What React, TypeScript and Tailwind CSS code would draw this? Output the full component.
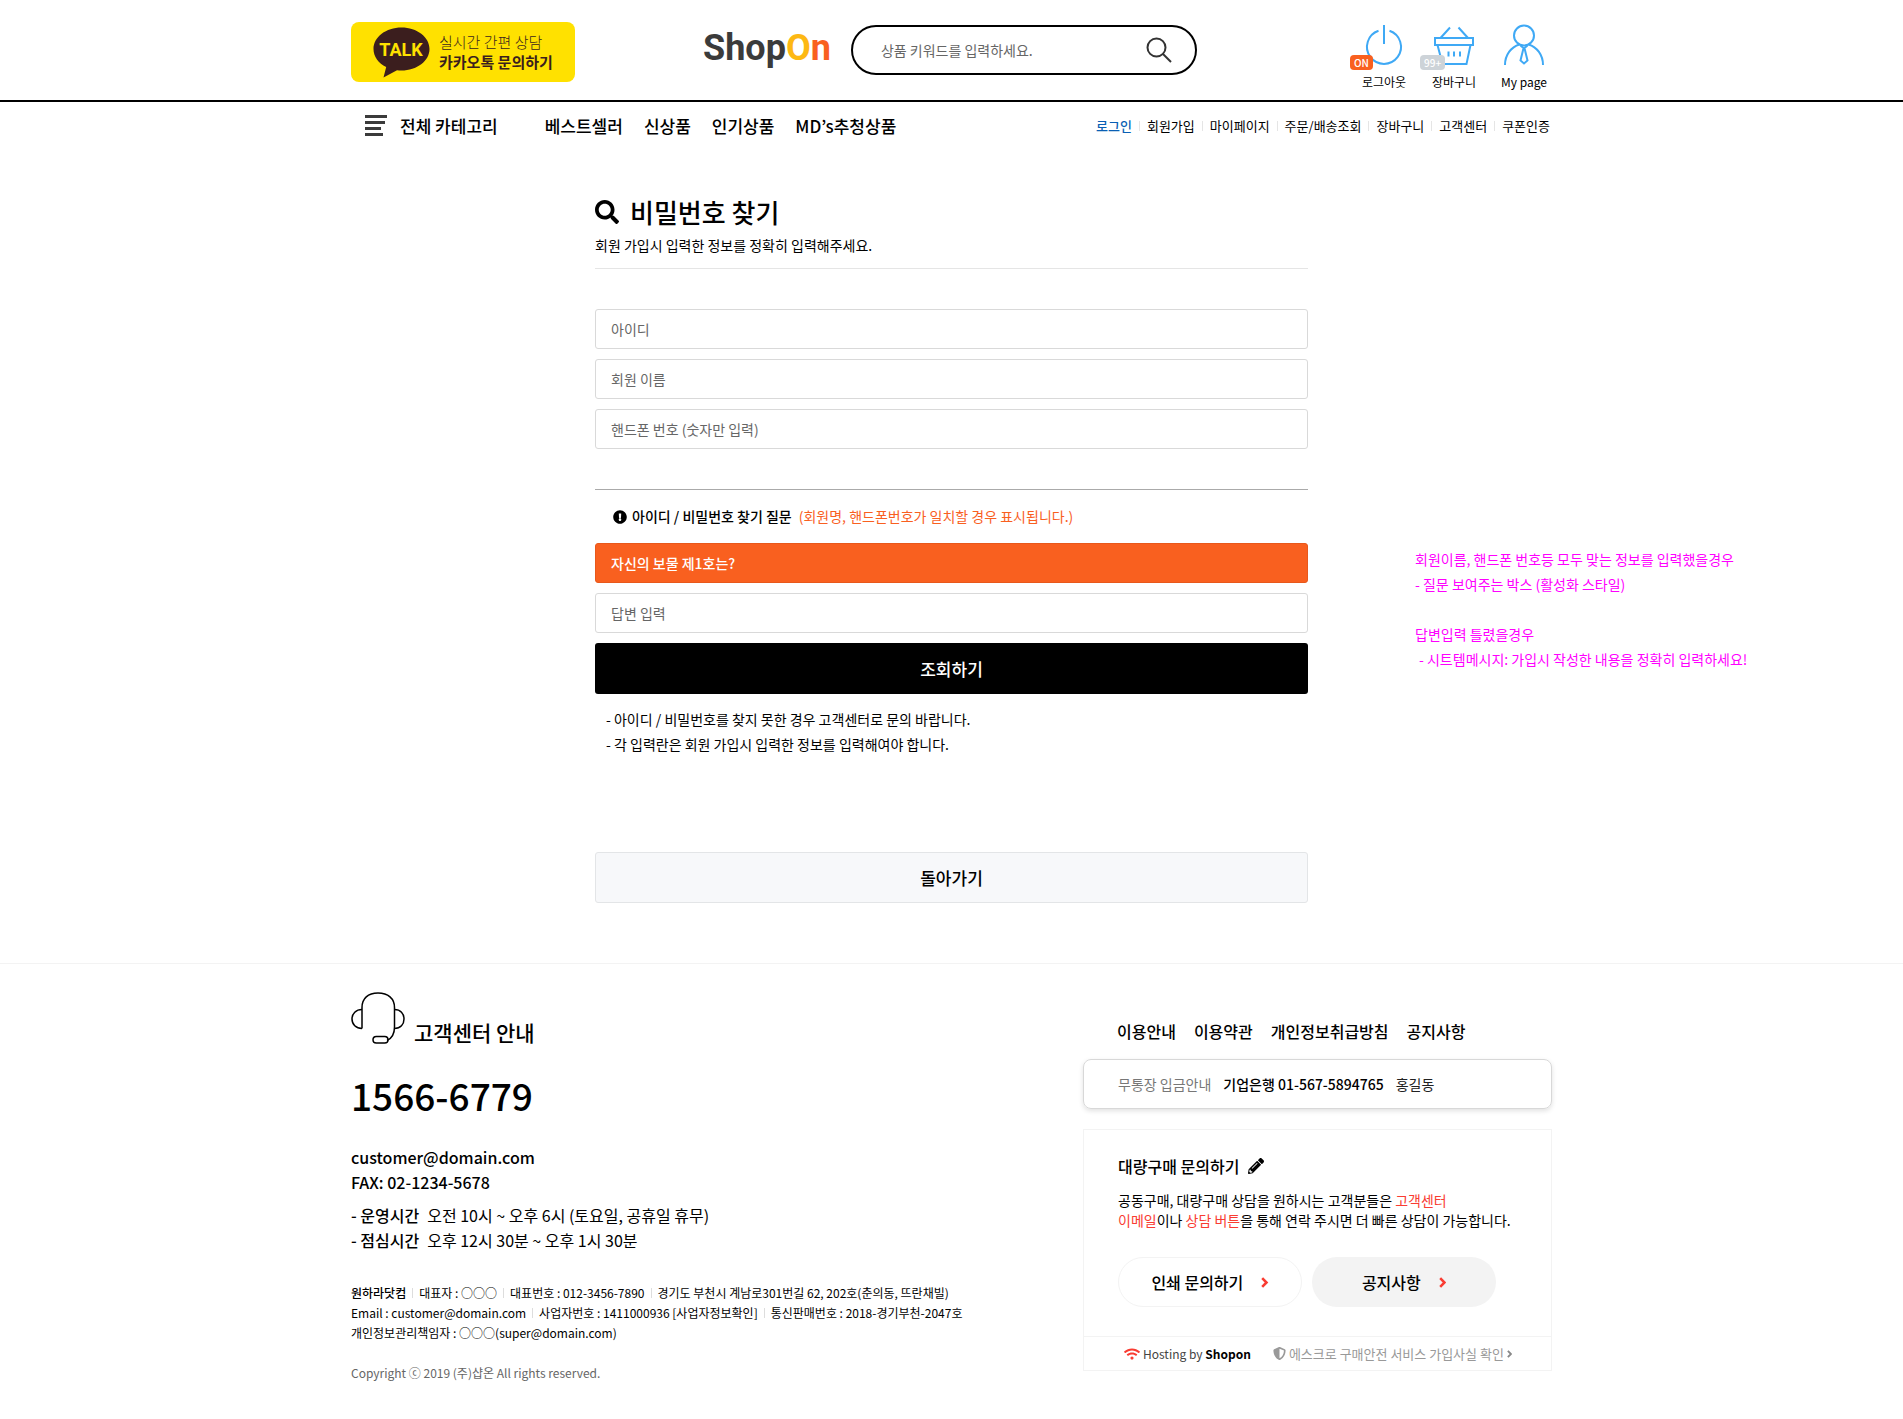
import React from 'react';
import { FaExclamationCircle, FaPencilAlt, FaSearch, FaShieldAlt, FaWifi } from 'react-icons/fa';

const mainMenu = ['베스트셀러', '신상품', '인기상품', "MD’s추청상품"];
const userMenu = ['로그인', '회원가입', '마이페이지', '주문/배송조회', '장바구니', '고객센터', '쿠폰인증'];
const footerMenu = ['이용안내', '이용약관', '개인정보취급방침', '공지사항'];

const companyInfo = [
  ['원하라닷컴', '대표자 : ○○○', '대표번호 : 012-3456-7890', '경기도 부천시 계남로301번길 62, 202호(춘의동, 뜨란채빌)'],
  ['Email : customer@domain.com', '사업자번호 : 1411000936 [사업자정보확인]', '통신판매번호 : 2018-경기부천-2047호'],
  ['개인정보관리책임자 : ○○○(super@domain.com)'],
];

function KakaoBanner() {
  return (
    <a href="#kakao" className="mt-1 flex h-[60px] w-[224px] items-center rounded-lg bg-[#ffe100] pl-[22px] text-[#3b1e1e]">
      <svg width="57" height="51" viewBox="0 0 57 51" className="shrink-0">
        <path
          d="M28.500 0.500C13 0.500 0.500 10 0.500 22c0 7.500 5 14.200 12.700 18.100L10.500 50.500 24 43.300c1.500.15 3 .2 4.500.2 15.500 0 28-9.600 28-21.500S44 .5 28.500 .5z"
          fill="#3b1e1e"
        />
        <text x="28" y="29" textAnchor="middle" fill="#ffe100" className="font-[Roboto,sans-serif] text-[18px] font-bold">
          TALK
        </text>
      </svg>
      <span className="ml-[9px] flex flex-col text-[15px] leading-5">
        <span className="font-light">실시간 간편 상담</span>
        <span className="font-bold">카카오톡 문의하기</span>
      </span>
    </a>
  );
}

function PowerIcon() {
  return (
    <svg width="40" height="42" viewBox="0 0 40 42" fill="none" stroke="#3fa9f5" strokeWidth="2">
      <path d="M20 1v19M14.500 6.800a17 17 0 1 0 11 0" />
    </svg>
  );
}

function BasketIcon() {
  return (
    <svg width="40" height="42" viewBox="0 0 40 42" fill="none" stroke="#3fa9f5" strokeWidth="2">
      <path d="M1 14h38v7H1zM3.500 21 8.500 40h24L36.500 21M6.500 14 16 3.500M34 14 24.500 3.500" />
      <path d="M14.500 27.500v5M20 27.500v5M26 27.500v5" />
    </svg>
  );
}

function PersonIcon() {
  return (
    <svg width="40" height="42" viewBox="0 0 40 42" fill="none" stroke="#3fa9f5" strokeWidth="2">
      <circle cx="20" cy="11.500" r="10" />
      <path d="M1 41c0-10 6-18 14.500-20.500M39 41c0-10-6-18-14.500-20.500" />
      <path d="M16.500 21.500 20 24.500l3.500-3M19.300 25l-2.800 11.500 3.500 3 3.500-3L20.700 25" />
    </svg>
  );
}

function HeadsetIcon() {
  return (
    <svg width="54" height="52" viewBox="0 0 54 52" fill="none" stroke="#000" strokeWidth="1.500">
      <path d="M11 36.500V15.500C11 6.500 17 1 27 1s16.500 5.500 16.500 14.500V35c0 7-3 11.500-7.500 13.500" />
      <path d="M11 17.500C5 17.500 1 21.500 1 27s4 9.500 10 9.500M43.500 17.500c6 0 9.500 4 9.500 9.500s-3.500 9.500-9.500 9.500" />
      <rect x="22" y="44.500" width="15" height="6.500" rx="3.250" />
    </svg>
  );
}

function Chevron({ height, color }: { height: number; color: string }) {
  return (
    <svg height={height} viewBox="0 0 8 12" fill="none" stroke={color} strokeWidth="2.800" className="shrink-0">
      <path d="M1.300 1.300 6 6l-4.700 4.700" />
    </svg>
  );
}

type QuickLinkProps = { label: string; icon: React.ReactNode; badge?: string; badgeClass?: string };

function QuickLink({ label, icon, badge, badgeClass }: QuickLinkProps) {
  return (
    <a href="#quick" className="relative flex w-14 flex-col items-center whitespace-nowrap text-[12px] leading-4">
      {icon}
      {badge && (
        <span className={`absolute top-[31px] -left-1.5 rounded px-1 text-[10px] leading-[15px] font-medium text-white ${badgeClass}`}>
          {badge}
        </span>
      )}
      <span className="mt-2">{label}</span>
    </a>
  );
}

function Field({ id, label }: { id: string; label: string }) {
  return (
    <input
      id={id}
      aria-label={label}
      placeholder={label}
      className="block h-10 w-full rounded-[3px] border border-[#d9d9d9] bg-white px-[15px] text-[14px] text-black placeholder:text-[#666]"
    />
  );
}

function Header() {
  return (
    <header>
      <div className="border-b-2 border-black">
        <div className="mx-auto flex h-[100px] max-w-[1201px] items-center">
          <KakaoBanner />
          <a href="#home" className="mb-1 ml-[128px] font-[Roboto,sans-serif] text-[36px] leading-[50px] font-bold text-[#3b3b3b]">
            Shop<span className="text-[#fdb813]">O</span><span className="text-[#f9601f]">n</span>
          </a>
          <form className="ml-5 flex h-[50px] w-[346px] items-center rounded-full border-2 border-black pr-[23px] pl-7">
            <input
              aria-label="상품 검색"
              placeholder="상품 키워드를 입력하세요."
              className="min-w-0 flex-1 text-[14px] outline-none placeholder:text-[#666]"
            />
            <button type="button" aria-label="검색">
              <svg width="26" height="26" viewBox="0 0 26 26" fill="none" stroke="#333" strokeWidth="2">
                <circle cx="10.500" cy="10.500" r="9" />
                <path d="m17 17 8 8" />
              </svg>
            </button>
          </form>
          <nav className="ml-auto flex gap-3.5 pt-3.5">
            <QuickLink label="로그아웃" icon={<PowerIcon />} badge="ON" badgeClass="bg-[#f9601f]" />
            <QuickLink label="장바구니" icon={<BasketIcon />} badge="99+" badgeClass="bg-[#cdd3d8]" />
            <QuickLink label="My page" icon={<PersonIcon />} />
          </nav>
        </div>
      </div>
      <div className="mx-auto flex h-12 max-w-[1201px] items-center">
        <button type="button" className="ml-3.5 flex items-center gap-[13px] text-[17px] leading-6 font-medium">
          <svg width="22" height="22" viewBox="0 0 22 22" fill="#3b3b3b">
            <path d="M0 0h22v3H0zM0 6h20v3H0zM0 12h16v3H0zM0 18h18v3H0z" />
          </svg>
          전체 카테고리
        </button>
        <nav className="ml-[47px] flex gap-[21px] text-[17px] leading-6 font-medium">
          {mainMenu.map((item) => (
            <a key={item} href="#menu">{item}</a>
          ))}
        </nav>
        <nav className="mr-0.5 ml-auto flex items-center text-[13px] leading-5">
          {userMenu.map((item, i) => (
            <React.Fragment key={item}>
              {i > 0 && <span className="mx-[7px] h-2.5 w-px bg-[#e5e5e5]" />}
              <a href="#user" className={i === 0 ? 'font-medium text-[#0a5fb4]' : ''}>{item}</a>
            </React.Fragment>
          ))}
        </nav>
      </div>
    </header>
  );
}

function FindPassword() {
  return (
    <main className="grid grid-cols-[1fr_713px_1fr] pt-[42px] text-[14px]">
      <section className="col-start-2">
        <h1 className="flex h-10 items-center gap-[11px] text-[26px] leading-10 font-medium">
          <FaSearch size={24} />
          비밀번호 찾기
        </h1>
        <p className="border-b border-[#e5e5e5] pt-0.5 pb-[11px] leading-[23px]">회원 가입시 입력한 정보를 정확히 입력해주세요.</p>
        <div className="mt-10 flex flex-col gap-2.5">
          <Field id="user-id" label="아이디" />
          <Field id="user-name" label="회원 이름" />
          <Field id="user-phone" label="핸드폰 번호 (숫자만 입력)" />
        </div>
      </section>

      <section className="col-start-2 mt-10 border-t border-[#aaa]">
        <h2 className="flex h-[53px] items-center pl-[18px] font-medium">
          <FaExclamationCircle size={14} />
          <span className="ml-[5px]">아이디 / 비밀번호 찾기 질문</span>
          <span className="ml-[7px] font-normal text-[#f9601f]">(회원명, 핸드폰번호가 일치할 경우 표시됩니다.)</span>
        </h2>
        <div className="flex flex-col gap-2.5">
          <p className="h-10 rounded-[3px] border border-[#e8581b] bg-[#f9601f] px-[15px] leading-[38px] font-medium text-white">
            자신의 보물 제1호는?
          </p>
          <Field id="answer" label="답변 입력" />
          <button type="button" className="h-[51px] rounded-[3px] bg-black text-[17px] font-medium text-white">
            조회하기
          </button>
        </div>
        <ul className="mt-[13px] pl-[11px] leading-[25px]">
          <li>- 아이디 / 비밀번호를 찾지 못한 경우 고객센터로 문의 바랍니다.</li>
          <li>- 각 입력란은 회원 가입시 입력한 정보를 입력해여야 합니다.</li>
        </ul>
        <button type="button" className="mt-[95px] h-[51px] w-full rounded-[3px] border border-[#e3e5e7] bg-[#f7f8fa] text-[17px] font-medium">
          돌아가기
        </button>
      </section>

      <aside className="col-start-3 mt-[98px] ml-[107px] leading-[25px] text-[#ff00ff]">
        <p>회원이름, 핸드폰 번호등 모두 맞는 정보를 입력했을경우</p>
        <p>- 질문 보여주는 박스 (활성화 스타일)</p>
        <p className="mt-[25px]">답변입력 틀렸을경우</p>
        <p className="pl-1">- 시트템메시지: 가입시 작성한 내용을 정확히 입력하세요!</p>
      </aside>
    </main>
  );
}

function CustomerCenter() {
  return (
    <section>
      <h2 className="flex items-end gap-[9px] text-[21px] leading-6 font-medium">
        <HeadsetIcon />
        고객센터 안내
      </h2>
      <p className="mt-6 text-[37px] leading-[54px] font-medium">1566-6779</p>
      <div className="mt-[23px] text-[16px] leading-[25px] font-medium">
        <p>customer@domain.com</p>
        <p>FAX: 02-1234-5678</p>
      </div>
      <dl className="mt-2 grid grid-cols-[auto_1fr] gap-x-2 text-[16px] leading-[25px]">
        <dt className="font-medium">- 운영시간</dt>
        <dd>오전 10시 ~ 오후 6시 (토요일, 공휴일 휴무)</dd>
        <dt className="font-medium">- 점심시간</dt>
        <dd>오후 12시 30분 ~ 오후 1시 30분</dd>
      </dl>
      <address className="mt-[30px] text-[12px] leading-5 not-italic">
        {companyInfo.map((row, r) => (
          <p key={r} className="flex items-center">
            {row.map((item, i) => (
              <React.Fragment key={item}>
                {i > 0 && <span className="mx-1.5 h-2.5 w-px bg-[#ddd]" />}
                <span className={r === 0 && i === 0 ? 'font-medium' : ''}>{item}</span>
              </React.Fragment>
            ))}
          </p>
        ))}
      </address>
      <p className="mt-5 text-[12px] leading-5 text-[#666]">Copyright ⓒ 2019 (주)샵온 All rights reserved.</p>
    </section>
  );
}

function ContactPanel() {
  return (
    <section className="w-[469px]">
      <nav className="mt-[27px] flex gap-[18px] pl-[34px] text-[16px] leading-6 font-medium">
        {footerMenu.map((item) => (
          <a key={item} href="#policy">{item}</a>
        ))}
      </nav>
      <p className="mt-4 flex h-[50px] items-center gap-3 rounded-lg border border-[#d8d8d8] pl-[34px] text-[14px] shadow-[0_2px_5px_rgba(0,0,0,0.12)]">
        <span className="text-[#777]">무통장 입금안내</span>
        <span className="font-medium">기업은행 01-567-5894765</span>
        <span className="text-[#222]">홍길동</span>
      </p>
      <div className="mt-5 border border-[#f3f3f3]">
        <div className="pt-6 pb-[29px] pl-[34px]">
          <h3 className="flex items-center gap-[9px] text-[16px] leading-6 font-medium">
            대량구매 문의하기
            <FaPencilAlt size={16} />
          </h3>
          <p className="mt-3 text-[14px] leading-5">
            공동구매, 대량구매 상담을 원하시는 고객분들은 <span className="text-[#f93c32]">고객센터</span>
            <br />
            <span className="text-[#f93c32]">이메일</span>이나 <span className="text-[#f93c32]">상담 버튼</span>을 통해 연락 주시면 더 빠른 상담이 가능합니다.
          </p>
          <div className="mt-[27px] flex gap-2.5 text-[16px] font-medium">
            <a href="#print" className="flex h-[50px] w-[184px] items-center justify-center gap-[18px] rounded-full border border-[#f3f3f3]">
              인쇄 문의하기
              <Chevron height={11} color="#f93c32" />
            </a>
            <a href="#notice" className="flex h-[50px] w-[184px] items-center justify-center gap-[18px] rounded-full bg-[#f3f3f3]">
              공지사항
              <Chevron height={11} color="#f93c32" />
            </a>
          </div>
        </div>
        <div className="flex h-[34px] items-center border-t border-[#f3f3f3] pl-10">
          <FaWifi size={16} className="text-[#f93c32]" />
          <span className="ml-[3px] text-[12px] text-[#444]">
            Hosting by <b className="font-bold text-black">Shopon</b>
          </span>
          <a href="#escrow" className="ml-[22px] flex items-center gap-[3px] text-[13px] text-[#999]">
            <FaShieldAlt size={13} />
            에스크로 구매안전 서비스 가입사실 확인
            <Chevron height={8} color="#888" />
          </a>
        </div>
      </div>
    </section>
  );
}

export default function App() {
  return (
    <div className="bg-white font-['Noto_Sans_CJK_KR',sans-serif] text-black">
      <Header />
      <FindPassword />
      <footer className="mt-[60px] border-t border-[#f3f3f3]">
        <div className="mx-auto flex max-w-[1201px] justify-between pt-7 pb-9">
          <CustomerCenter />
          <ContactPanel />
        </div>
      </footer>
    </div>
  );
}
